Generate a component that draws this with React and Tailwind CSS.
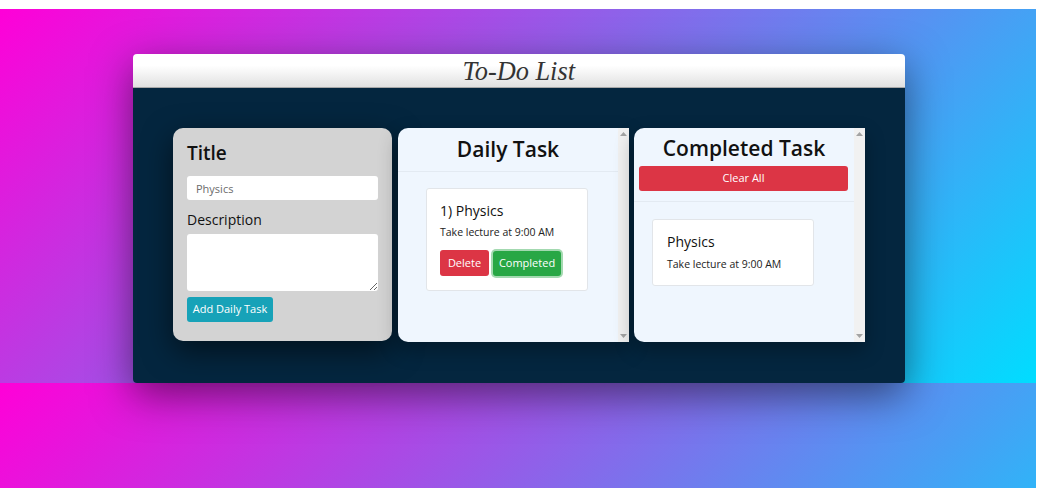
import React from "react";

function ScrollBar() {
  return (
    <div className="flex w-[11px] shrink-0 flex-col items-center justify-between bg-[#f1f1f1] py-[4px]">
      <svg width="7" height="4" viewBox="0 0 7 4">
        <path d="M0 4 L3.5 0 L7 4 Z" fill="#a3a3a3" />
      </svg>
      <svg width="7" height="4" viewBox="0 0 7 4">
        <path d="M0 0 L7 0 L3.5 4 Z" fill="#a3a3a3" />
      </svg>
    </div>
  );
}

export default function App() {
  const ui = "font-['Open_Sans','Noto_Sans',sans-serif]";
  return (
    <div className={`min-h-screen bg-white pt-[9px] pr-[2px] ${ui}`}>
      <div className="h-[479px] bg-[linear-gradient(135deg,#ff00d8,#00ddff)] bg-[length:100%_374px] bg-repeat-y pt-[45px]">
        <div className="ml-[133px] w-[772px] rounded-[4px] shadow-[0_12px_40px_rgba(0,0,0,0.5)]">
          <div className="flex h-[34px] items-center justify-center rounded-t-[4px] border-b border-[#a8a8a8] bg-[linear-gradient(to_bottom,#ffffff_35%,#e1e1e1)]">
            <span className="inline-block scale-x-[0.94] font-['Liberation_Serif',serif] text-[28px] italic leading-none text-[#333]">
              To-Do List
            </span>
          </div>
          <div className="flex rounded-b-[4px] bg-[#04263f] px-[40px] pt-[40px] pb-[41px]">
            {/* Title panel */}
            <div className="flex h-[213px] w-[219px] flex-col rounded-[10px] bg-[#d3d3d3] px-[14px] pt-[13px] shadow-[0_10px_30px_rgba(0,0,0,0.55)]">
              <div className="text-[19px] font-semibold leading-[24px] text-[#111]">Title</div>
              <input
                readOnly
                value="Physics"
                className="mt-[11px] h-[24px] w-full rounded-[3px] bg-white px-[9px] text-[11px] text-[#6b6b6b] outline-none"
              />
              <div className="mt-[10px] text-[14px] font-medium leading-[20px] text-[#111]">Description</div>
              <textarea
                readOnly
                className="mt-[4px] h-[57px] w-full rounded-[3px] bg-white outline-none"
              />
              <div className="mt-[6px] flex h-[25px] w-[86px] items-center justify-center rounded-[3px] bg-[#17a2b8] text-[11px] text-white">
                Add Daily Task
              </div>
            </div>

            {/* Daily panel */}
            <div className="ml-[6px] flex h-[214px] w-[231px] overflow-hidden rounded-l-[10px] bg-[#eff6fe] shadow-[0_8px_20px_rgba(0,0,0,0.3)]">
              <div className="flex-1">
                <div className="flex h-[44px] items-center justify-center border-b border-[#e3eaf2]">
                  <span className="text-[21px] font-semibold leading-none text-[#111]">Daily Task</span>
                </div>
                <div className="ml-[28px] mt-[16px] h-[103px] w-[162px] rounded-[3px] border border-[#e2e5e9] bg-white px-[13px] pt-[13px]">
                  <div className="text-[14px] font-medium leading-[18px] text-[#111]">1) Physics</div>
                  <div className="mt-[5px] text-[10.5px] leading-[14px] text-[#222]">Take lecture at 9:00 AM</div>
                  <div className="mt-[11px] flex items-center gap-[4px]">
                    <div className="flex h-[26px] w-[49px] items-center justify-center rounded-[3px] bg-[#dc3545] text-[11px] text-white">
                      Delete
                    </div>
                    <div className="flex h-[25px] w-[68px] items-center justify-center rounded-[3px] bg-[#28a745] text-[11px] text-white shadow-[0_0_0_2px_rgba(72,180,97,0.5)]">
                      Completed
                    </div>
                  </div>
                </div>
              </div>
              <ScrollBar />
            </div>

            {/* Completed panel */}
            <div className="ml-[5px] flex h-[214px] w-[231px] overflow-hidden rounded-l-[10px] bg-[#eff6fe] shadow-[0_8px_20px_rgba(0,0,0,0.3)]">
              <div className="flex-1">
                <div className="border-b border-[#e3eaf2] pb-[10px]">
                  <div className="flex h-[38px] items-center justify-center pt-[3px]">
                    <span className="text-[21px] font-semibold leading-none text-[#111]">Completed Task</span>
                  </div>
                  <div className="ml-[5px] mr-[6px] flex h-[25px] items-center justify-center rounded-[3px] bg-[#dc3545] text-[11px] text-white">
                    Clear All
                  </div>
                </div>
                <div className="ml-[18px] mt-[17px] h-[67px] w-[162px] rounded-[3px] border border-[#e2e5e9] bg-white px-[14px] pt-[13px]">
                  <div className="text-[14px] font-medium leading-[18px] text-[#111]">Physics</div>
                  <div className="mt-[6px] text-[10.5px] leading-[14px] text-[#222]">Take lecture at 9:00 AM</div>
                </div>
              </div>
              <ScrollBar />
            </div>
          </div>
        </div>
      </div>
    </div>
  );
}
